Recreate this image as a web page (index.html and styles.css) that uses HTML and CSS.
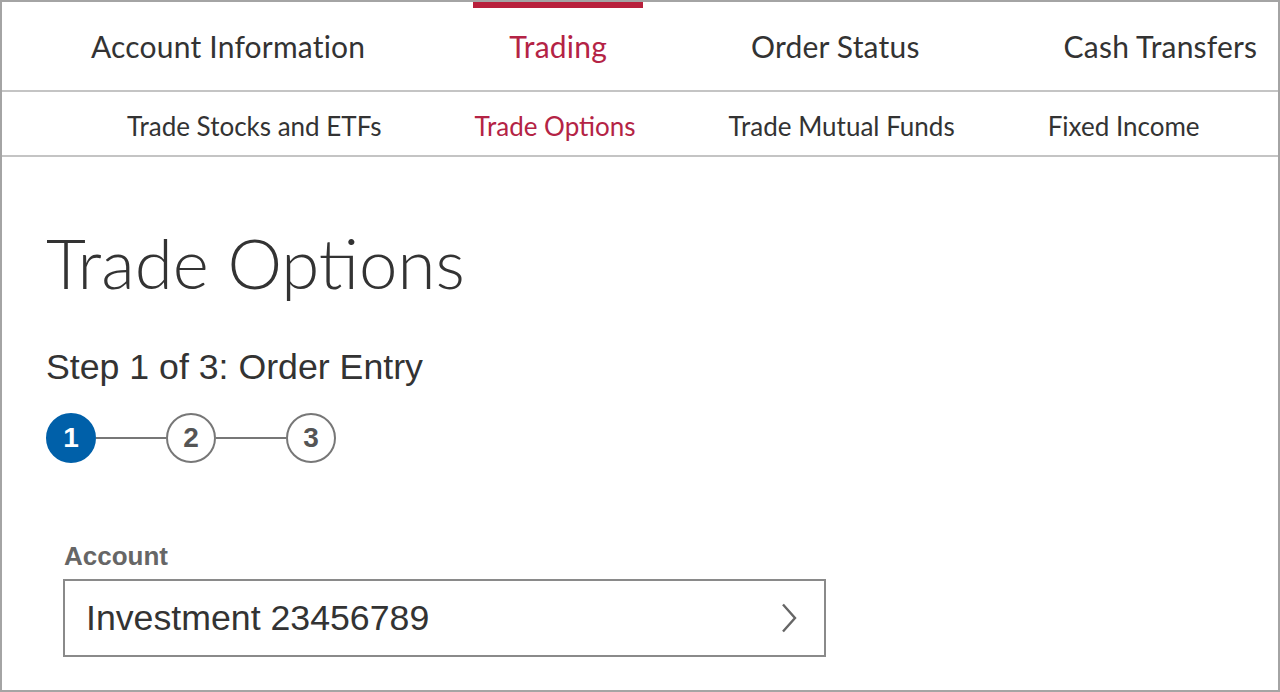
FILE: index.html
```html
<!DOCTYPE html>
<html lang="en">
<head>
<meta charset="utf-8">
<title>Trade Options</title>
<link rel="stylesheet" href="styles.css">
</head>
<body>
<div class="frame">
  <nav class="mainnav">
    <a class="tab">Account Information</a>
    <a class="tab active">Trading</a>
    <a class="tab">Order Status</a>
    <a class="tab">Cash Transfers</a>
  </nav>
  <nav class="subnav">
    <a class="sub">Trade Stocks and ETFs</a>
    <a class="sub active">Trade Options</a>
    <a class="sub">Trade Mutual Funds</a>
    <a class="sub">Fixed Income</a>
  </nav>
  <main class="content">
    <h1 class="title">Trade Options</h1>
    <p class="step">Step 1 of 3: Order Entry</p>
    <div class="stepper">
      <span class="dot current">1</span>
      <span class="line"></span>
      <span class="dot">2</span>
      <span class="line"></span>
      <span class="dot">3</span>
    </div>
    <label class="label">Account</label>
    <div class="select">
      <span class="value">Investment 23456789</span>
      <svg class="chev" width="16" height="30" viewBox="0 0 16 30"><path d="M2 1.5 L14 15 L2 28.5" fill="none" stroke="#666" stroke-width="2.4"/></svg>
    </div>
  </main>
</div>
</body>
</html>
```

FILE: styles.css
```css
html, body {
  margin: 0;
  padding: 0;
  background: #fff;
}
.frame {
  box-sizing: border-box;
  width: 1280px;
  height: 692px;
  border: 2px solid #a4a4a4;
  overflow: hidden;
  background: #fff;
}
.mainnav {
  display: flex;
  gap: 72px;
  height: 88px;
  padding-left: 53px;
  border-bottom: 2px solid #c4c4c4;
  white-space: nowrap;
}
.tab {
  box-sizing: border-box;
  display: flex;
  align-items: center;
  padding: 0 36px 6px;
  font-family: Lato, "Open Sans", sans-serif;
  font-size: 30px;
  letter-spacing: 0.2px;
  color: #333;
  border-top: 6px solid transparent;
}
.tab.active {
  color: #b42345;
  border-top-color: #b8203c;
}
.subnav {
  display: flex;
  align-items: center;
  gap: 93px;
  height: 63px;
  padding-left: 125px;
  border-bottom: 2px solid #c4c4c4;
  white-space: nowrap;
}
.sub {
  font-family: Lato, "Open Sans", sans-serif;
  font-size: 26px;
  color: #333;
  padding-top: 5px;
}
.sub.active {
  color: #b42345;
}
.content {
  padding: 0 0 0 44px;
}
.title {
  margin: 64px 0 0;
  font-family: Lato, sans-serif;
  font-weight: 300;
  font-size: 69px;
  line-height: 84px;
  color: #333;
}
.step {
  margin: 41px 0 0;
  font-family: "Liberation Sans", Arial, sans-serif;
  font-size: 35.7px;
  line-height: 42px;
  color: #333;
}
.stepper {
  display: flex;
  align-items: center;
  margin-top: 25px;
}
.dot {
  box-sizing: border-box;
  width: 50px;
  height: 50px;
  border-radius: 50%;
  border: 2px solid #777;
  display: flex;
  align-items: center;
  justify-content: center;
  font-family: "Liberation Sans", Arial, sans-serif;
  font-weight: bold;
  font-size: 28px;
  color: #555;
}
.dot.current {
  background: #0060a9;
  border-color: #0060a9;
  color: #fff;
}
.line {
  width: 70px;
  height: 2px;
  background: #777;
}
.label {
  display: block;
  margin: 78px 0 0 18px;
  font-family: "Liberation Sans", Arial, sans-serif;
  font-weight: bold;
  font-size: 26px;
  line-height: 30px;
  color: #666;
}
.select {
  box-sizing: border-box;
  width: 763px;
  height: 78px;
  margin: 8px 0 0 17px;
  border: 2px solid #8a8a8a;
  display: flex;
  align-items: center;
  justify-content: space-between;
  padding: 0 27px 0 21px;
}
.value {
  font-family: "Liberation Sans", Arial, sans-serif;
  font-size: 35.7px;
  color: #333;
}
.chev {
  display: block;
}
```
